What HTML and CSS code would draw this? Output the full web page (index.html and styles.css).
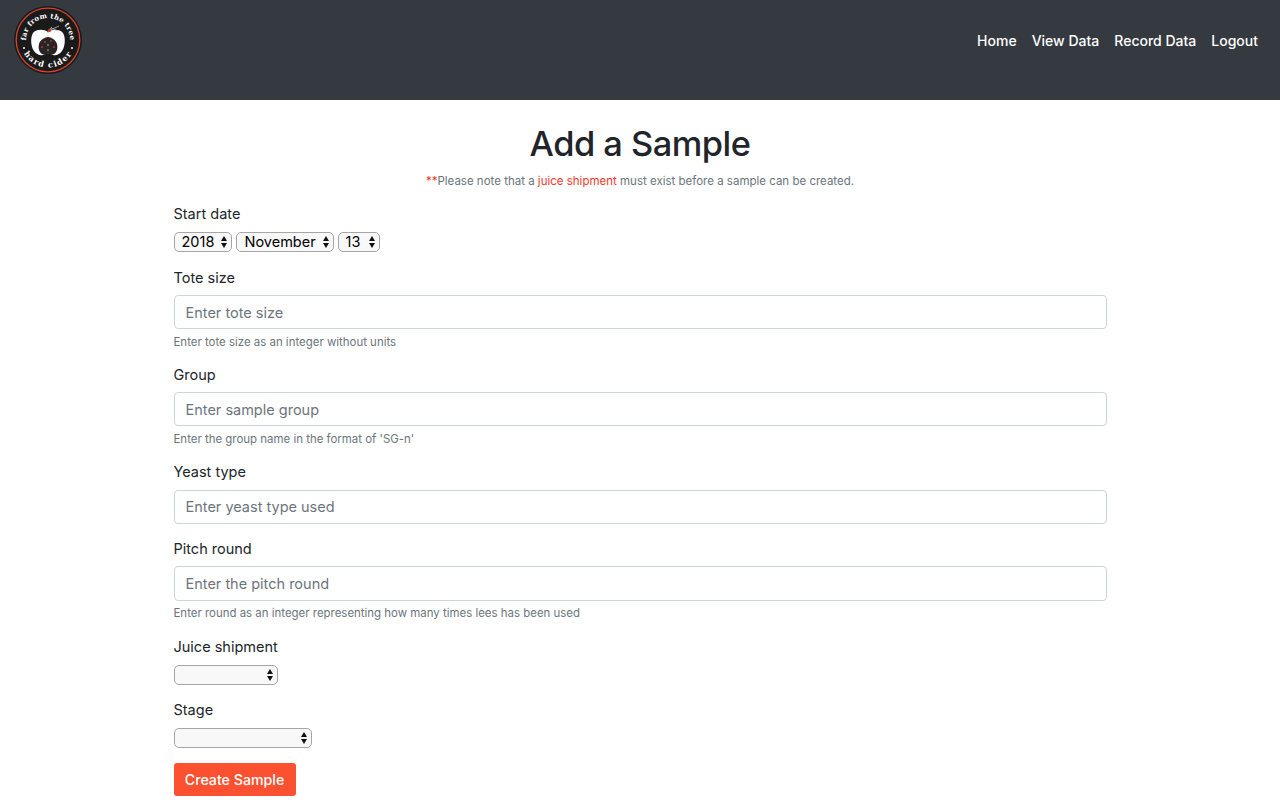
FILE: index.html
```html
<!DOCTYPE html>
<html lang="en">
  <head>
    <meta charset="UTF-8" />
    <meta name="viewport" content="width=device-width, initial-scale=1.0" />
    <title>Add a Sample</title>
    <link rel="stylesheet" href="styles.css">
  </head>
  <body>
    <nav class="navbar">
      <a class="brand" href="#">
        <svg class="logo" width="68" height="68" viewBox="0 0 68 68">
          <defs>
            <path id="arc-top" d="M12.800 40A22 22 0 1 1 55.200 40"/>
            <path id="arc-bottom" d="M7.400 41A27.500 27.500 0 0 0 60.600 41"/>
          </defs>
          <circle cx="34" cy="34" r="34" fill="#1b1a1b"/>
          <circle cx="34" cy="34" r="31.800" fill="none" stroke="#d8432b" stroke-width="1.300"/>
          <text class="logo-text"><textPath href="#arc-top" startOffset="50%">far from the tree</textPath></text>
          <text class="logo-text logo-text-bottom"><textPath href="#arc-bottom" startOffset="50%">hard cider</textPath></text>
          <circle cx="10" cy="42" r="1" fill="#fff"/>
          <circle cx="58" cy="42" r="1" fill="#fff"/>
          <path d="M34 26c-4-3-12-3-15 1-3 5-2 14 1 18 2 3 6 5 9 4l5-2 5 2c3 1 7-1 9-4 3-4 4-13 1-18-3-4-11-4-15-1z" fill="#fff"/>
          <path d="M34 31c-3 0-8 3-9 7-1 4 0 8 3 10 2 1 4 1 6-1 2 2 4 2 6 1 3-2 4-6 3-10-1-4-6-7-9-7z" fill="#2a2426"/>
          <circle cx="31" cy="36" r=".9" fill="#b8392b"/>
          <circle cx="37" cy="35" r=".9" fill="#b8392b"/>
          <circle cx="28" cy="41" r=".9" fill="#b8392b"/>
          <circle cx="40" cy="41" r=".9" fill="#b8392b"/>
          <circle cx="34" cy="44" r=".7" fill="#ddd"/>
          <circle cx="34" cy="39" r=".7" fill="#ddd"/>
          <path d="M34 27c0-2 2-5 4-6M36 24l9-4M37 22l7 3" fill="none" stroke="#bbb" stroke-width=".8"/>
          <circle cx="35.500" cy="24.500" r="1.600" fill="#c93a26"/>
        </svg>
      </a>
      <ul class="nav-links">
        <li><a href="#">Home</a></li>
        <li><a href="#">View Data</a></li>
        <li><a href="#">Record Data</a></li>
        <li><a href="#">Logout</a></li>
      </ul>
    </nav>

    <main class="container">
      <h1 class="page-title">Add a Sample</h1>
      <p class="note"><span class="red">**</span>Please note that a <a class="red" href="#">juice shipment</a> must exist before a sample can be created.</p>

      <form>
        <div class="form-group date-group">
          <label>Start date</label>
          <div class="date-selects">
            <span class="select-wrap year-wrap"><select><option>2018</option></select></span>
            <span class="select-wrap month-wrap"><select><option>November</option></select></span>
            <span class="select-wrap day-wrap"><select><option>13</option></select></span>
          </div>
        </div>
        <div class="form-group tote-group">
          <label for="tote">Tote size</label>
          <input id="tote" class="form-control" type="text" placeholder="Enter tote size">
          <small class="help">Enter tote size as an integer without units</small>
        </div>
        <div class="form-group">
          <label for="group">Group</label>
          <input id="group" class="form-control" type="text" placeholder="Enter sample group">
          <small class="help">Enter the group name in the format of 'SG-n'</small>
        </div>
        <div class="form-group yeast-group">
          <label for="yeast">Yeast type</label>
          <input id="yeast" class="form-control" type="text" placeholder="Enter yeast type used">
        </div>
        <div class="form-group pitch-group">
          <label for="pitch">Pitch round</label>
          <input id="pitch" class="form-control" type="text" placeholder="Enter the pitch round">
          <small class="help">Enter round as an integer representing how many times lees has been used</small>
        </div>
        <div class="form-group">
          <label for="juice">Juice shipment</label>
          <span class="select-wrap juice-wrap"><select id="juice"><option></option></select></span>
        </div>
        <div class="form-group">
          <label for="stage">Stage</label>
          <span class="select-wrap stage-wrap"><select id="stage"><option></option></select></span>
        </div>
        <button class="btn-create" type="button">Create Sample</button>
      </form>
    </main>
  </body>
</html>
```

FILE: styles.css
```css
* { box-sizing: border-box; }
body {
  margin: 0;
  font-family: Inter, "Liberation Sans", sans-serif;
  font-size: 14.500px;
  line-height: 22px;
  color: #212529;
  background: #fff;
}
a { text-decoration: none; }
.red { color: #f7382a; }

/* navbar */
.navbar {
  height: 100px;
  background: #343a40;
  display: flex;
  justify-content: space-between;
  align-items: flex-start;
  padding: 6px 14px;
}
.brand { display: block; height: 68px; }
.logo { display: block; }
.logo-text {
  font-family: "DejaVu Serif", serif;
  font-size: 7px;
  font-weight: 700;
  letter-spacing: .2px;
  fill: #fff;
  text-anchor: middle;
}
.logo-text-bottom { font-size: 8px; letter-spacing: 1.200px; }
.nav-links {
  list-style: none;
  display: flex;
  gap: 15px;
  margin: 24px 8px 0 0;
  padding: 0;
}
.nav-links a { color: #fff; font-weight: 500; font-size: 14px; }

/* page */
.container { width: 933px; margin: 0 auto; }
.page-title {
  margin: 20px 0 0;
  text-align: center;
  font-size: 34.400px;
  line-height: 48px;
  font-weight: 500;
  letter-spacing: -.5px;
}
.note {
  margin: 5px 0 0;
  text-align: center;
  font-size: 11.500px;
  line-height: 16px;
  color: #6c757d;
}
form { margin-top: 14px; }
.form-group { margin-bottom: 14.600px; }
.yeast-group { margin-bottom: 14.100px; }
.pitch-group { margin-bottom: 15.100px; }
label { display: block; margin-bottom: 6.400px; }
.date-group label { margin-bottom: 7px; }
.form-control {
  display: block;
  width: 100%;
  height: 34px;
  padding: 1px 11px 0;
  border: 1px solid #ced4da;
  border-radius: 4px;
  font: inherit;
  color: #495057;
}
.yeast-group .form-control,
.pitch-group .form-control { padding-top: 0; }
.pitch-group .form-control { height: 35px; }
.form-control::placeholder { color: #6c757d; opacity: 1; }
.help {
  display: block;
  margin-top: 4.300px;
  font-size: 11.450px;
  line-height: 16px;
  color: #6c757d;
}
.tote-group .help { margin: 5.300px 0 -1px; }

/* selects with the stacked arrows */
.date-selects { display: flex; gap: 4px; }
.select-wrap { display: block; position: relative; height: 20px; }
.select-wrap select {
  appearance: none;
  display: block;
  width: 100%;
  height: 20px;
  padding: 0 0 0 7px;
  border: 1px solid #a6a6a6;
  border-radius: 5px;
  background: #f8f8f8;
  font: inherit;
  line-height: 18px;
  color: #000;
}
.month-wrap select { padding-left: 8px; }
.select-wrap::before,
.select-wrap::after {
  content: "";
  position: absolute;
  right: 5px;
  width: 0;
  height: 0;
  border-left: 3.500px solid transparent;
  border-right: 3.500px solid transparent;
  pointer-events: none;
}
.select-wrap::before { top: 4px; border-bottom: 5px solid #111; }
.select-wrap::after { top: 11px; border-top: 5px solid #111; }
.year-wrap { width: 58px; }
.month-wrap { width: 98px; }
.day-wrap { width: 42px; }
.juice-wrap { width: 104px; }
.stage-wrap { width: 138px; }

.btn-create {
  display: block;
  width: 122px;
  height: 33px;
  margin-top: 15px;
  padding: 1px 0 0;
  border: 0;
  border-radius: 3px;
  background: #fb5130;
  color: #fff;
  font: inherit;
  font-size: 14.200px;
  font-weight: 500;
}
```
